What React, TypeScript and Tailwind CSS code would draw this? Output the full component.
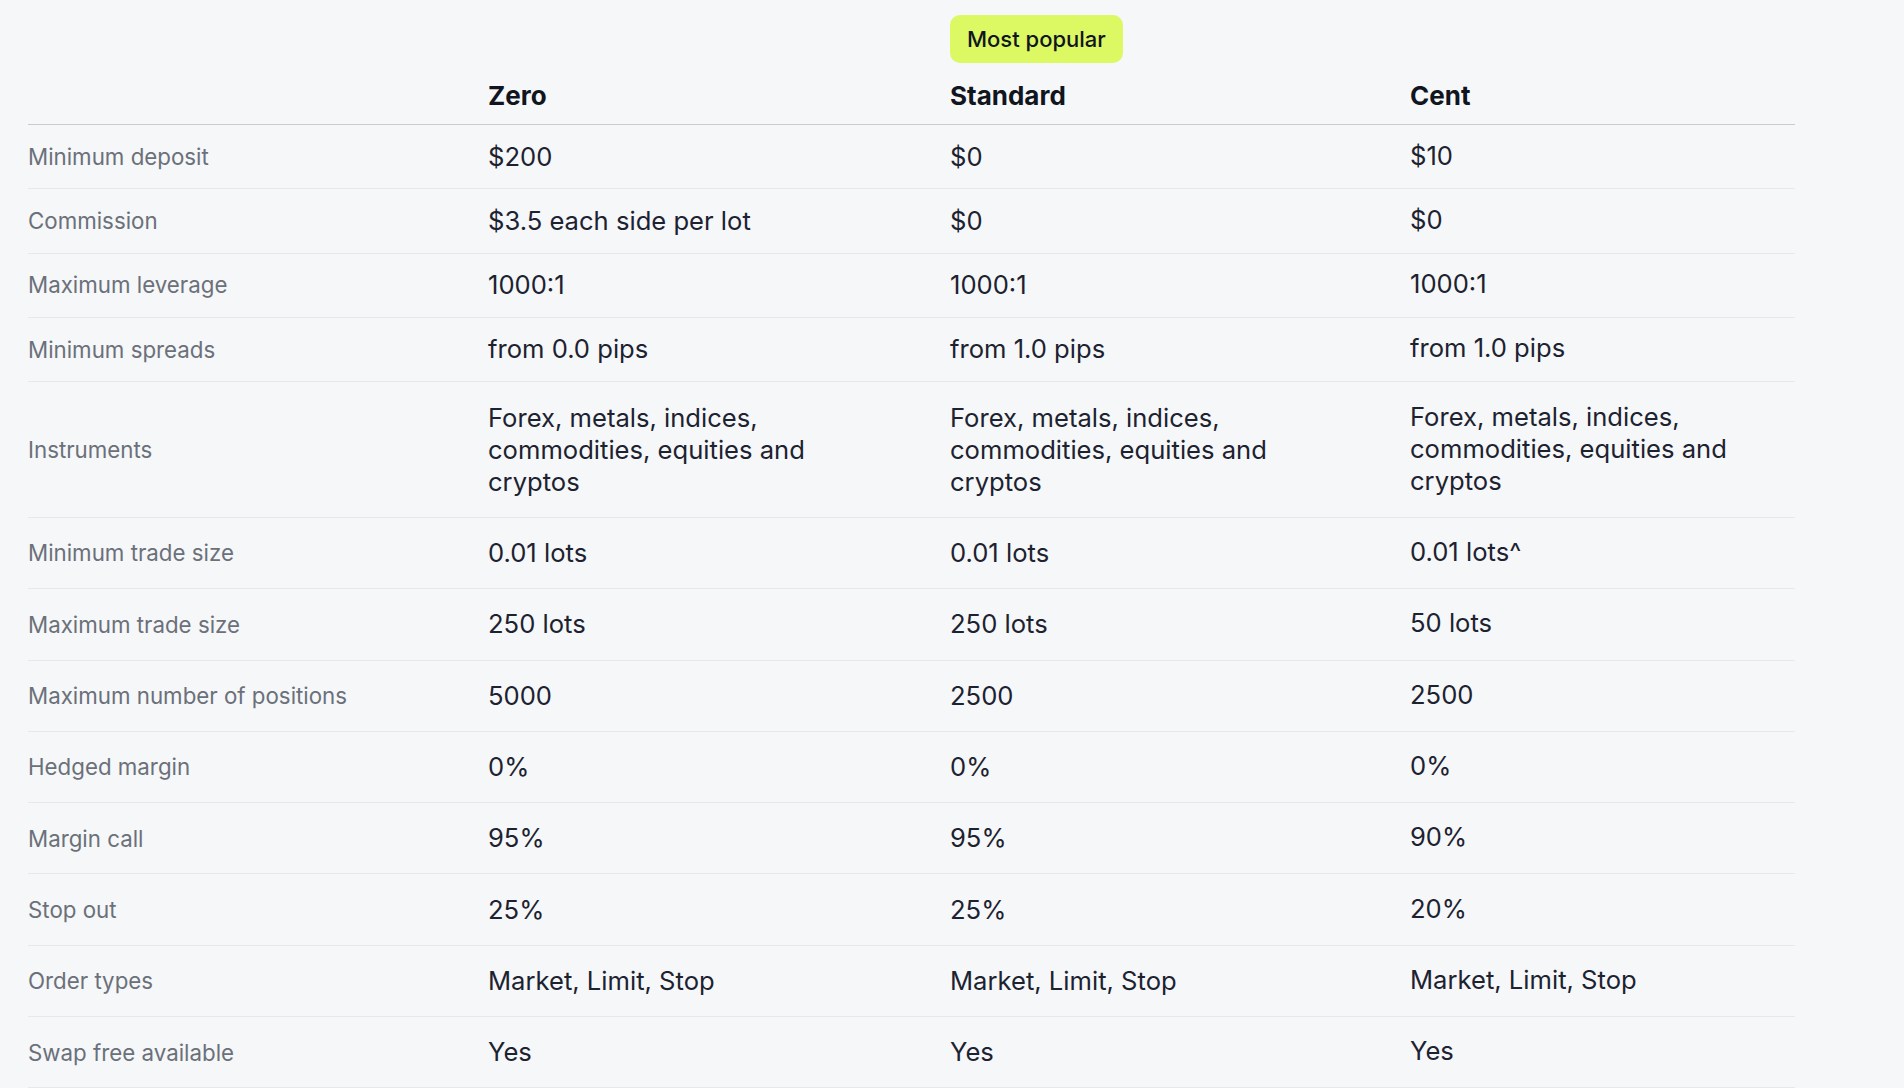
const rows: { label: string; zero: string; standard: string; cent: string; h: string }[] = [
  { label: "Minimum deposit", zero: "$200", standard: "$0", cent: "$10", h: "h-[64.25px]" },
  { label: "Commission", zero: "$3.5 each side per lot", standard: "$0", cent: "$0", h: "h-[64.25px]" },
  { label: "Maximum leverage", zero: "1000:1", standard: "1000:1", cent: "1000:1", h: "h-[64.25px]" },
  { label: "Minimum spreads", zero: "from 0.0 pips", standard: "from 1.0 pips", cent: "from 1.0 pips", h: "h-[64.25px]" },
  {
    label: "Instruments",
    zero: "Forex, metals, indices, commodities, equities and cryptos",
    standard: "Forex, metals, indices, commodities, equities and cryptos",
    cent: "Forex, metals, indices, commodities, equities and cryptos",
    h: "h-[136px]",
  },
  { label: "Minimum trade size", zero: "0.01 lots", standard: "0.01 lots", cent: "0.01 lots^", h: "h-[71.3px]" },
  { label: "Maximum trade size", zero: "250 lots", standard: "250 lots", cent: "50 lots", h: "h-[71.3px]" },
  { label: "Maximum number of positions", zero: "5000", standard: "2500", cent: "2500", h: "h-[71.3px]" },
  { label: "Hedged margin", zero: "0%", standard: "0%", cent: "0%", h: "h-[71.3px]" },
  { label: "Margin call", zero: "95%", standard: "95%", cent: "90%", h: "h-[71.3px]" },
  { label: "Stop out", zero: "25%", standard: "25%", cent: "20%", h: "h-[71.3px]" },
  { label: "Order types", zero: "Market, Limit, Stop", standard: "Market, Limit, Stop", cent: "Market, Limit, Stop", h: "h-[71.3px]" },
  { label: "Swap free available", zero: "Yes", standard: "Yes", cent: "Yes", h: "h-[71.3px]" },
];

const cols = "grid grid-cols-[460px_462px_460px_385px]";

function App() {
  return (
    <div
      className="min-h-screen bg-[#f5f7f9] pl-[28px] pt-[15px]"
      style={{ fontFamily: "Inter, 'Noto Sans', sans-serif" }}
    >
      <div className="w-[1767px]">
        <div className={`${cols} items-end border-b border-[#c9cbcf] pb-[12px]`}>
          <div />
          <div className="text-[26px] font-bold leading-8 text-[#111520]">Zero</div>
          <div className="flex flex-col items-start">
            <span className="mb-[17px] flex h-[48px] items-center rounded-[10px] bg-[#dcf862] px-[17px] text-[22px] font-medium text-[#111520]">
              Most popular
            </span>
            <div className="text-[26px] font-bold leading-8 text-[#111520]">Standard</div>
          </div>
          <div className="text-[26px] font-bold leading-8 text-[#111520]">Cent</div>
        </div>
        {rows.map((r) => (
          <div key={r.label} className={`${cols} ${r.h} items-center border-b border-[#e6e8eb]`}>
            <div className="text-[22.3px] text-[#6b7079]">{r.label}</div>
            <div className="max-w-[360px] text-[25.6px] leading-8 text-[#1d2230]">{r.zero}</div>
            <div className="max-w-[360px] text-[25.6px] leading-8 text-[#1d2230]">{r.standard}</div>
            <div className="-mt-[2px] max-w-[360px] text-[25.6px] leading-8 text-[#1d2230]">{r.cent}</div>
          </div>
        ))}
      </div>
    </div>
  );
}

export default App;
